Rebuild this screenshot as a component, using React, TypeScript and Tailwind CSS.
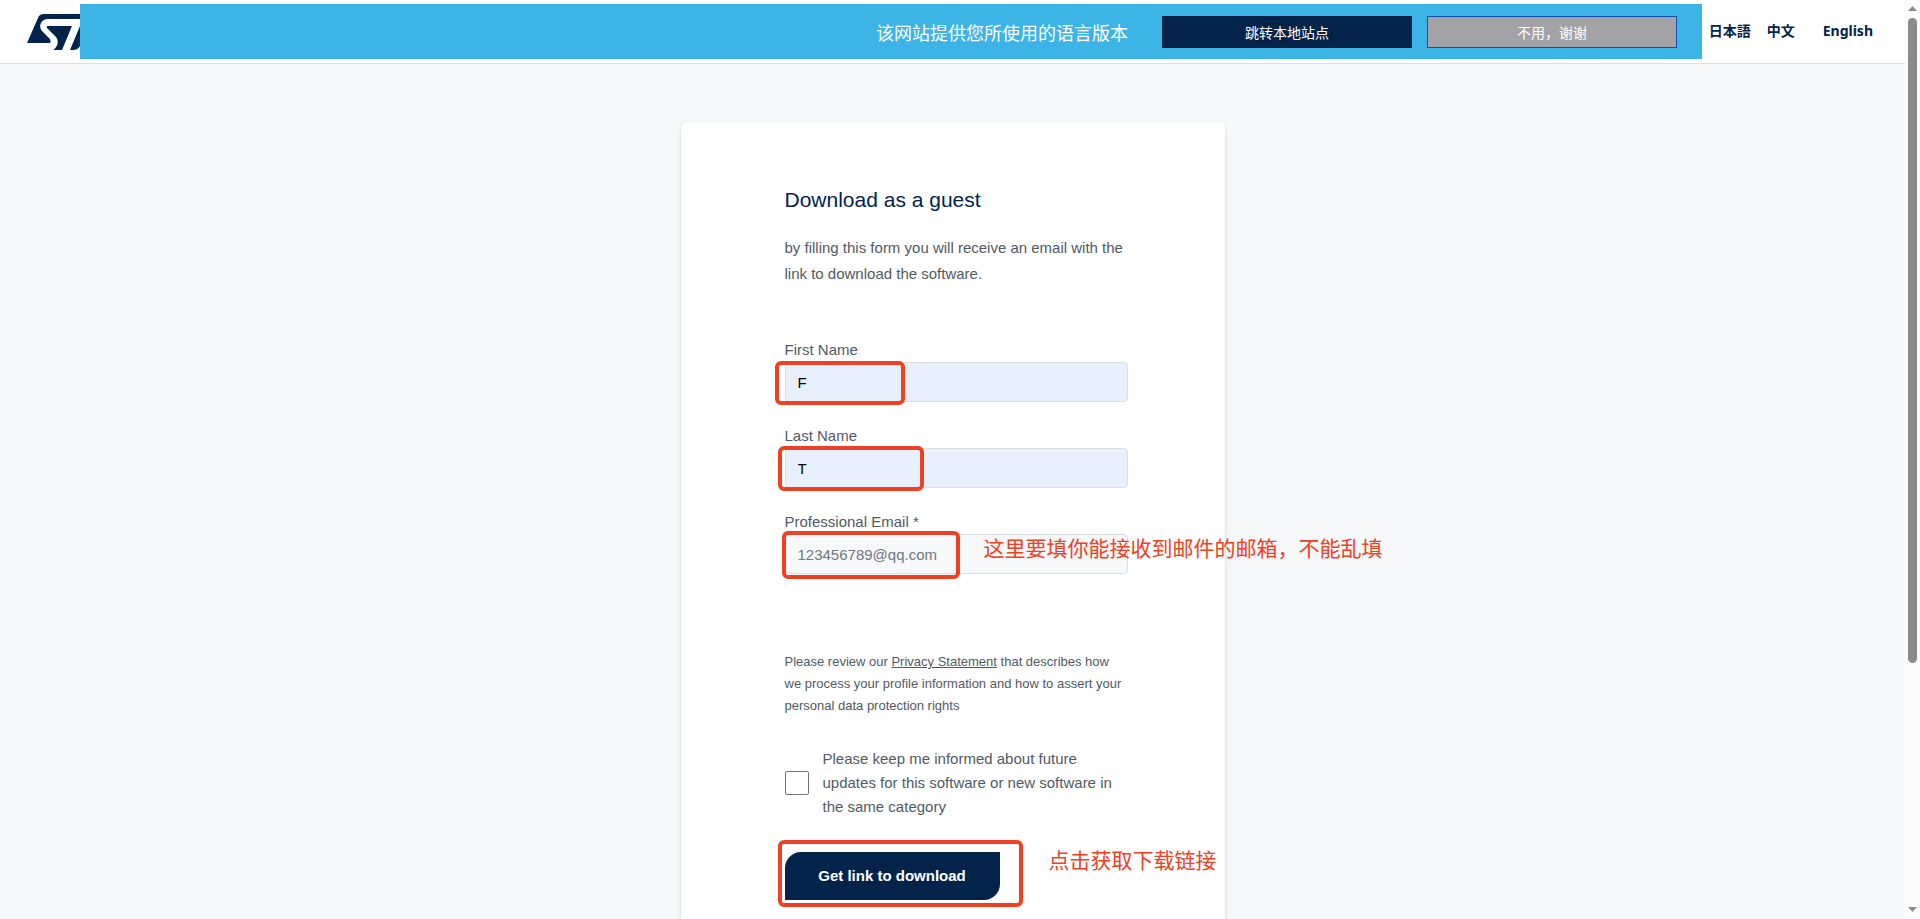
import React, { useState } from 'react'

const Logo = () => {
    return (
        <svg width="76" height="36" viewBox="0 0 76 36" aria-label="ST" role="img">
            <path d="M17 0 H76 V5 H21 C14 5 11 12 15 17 L22 24 C24 26 24 28 23 29 H0 L11 4 C12 1 14 0 17 0 Z" fill="#03234b" />
            <path d="M21 12 H45 L35 36 H26 C31 33 32 27 29 23 L21 15 C19 13 19 12 21 12 Z" fill="#03234b" />
            <path d="M53 12 H76 L68 26 H56 C53 33 51 36 46 36 H43 Z" fill="#03234b" />
        </svg>
    )
}

const Scrollbar = () => {
    return (
        <div className="flex w-[15px] shrink-0 flex-col items-center justify-between bg-[#fcfcfc] pt-1.5 pb-[7px]">
            <svg width="9" height="5" viewBox="0 0 9 5"><path d="M4.5 0 L9 5 H0 Z" fill="#8b8b8b" /></svg>
            <div className="mt-[7px] flex w-full flex-1 justify-center">
                <div className="h-[72.5%] w-[9px] rounded-full bg-[#8b8b8b]"></div>
            </div>
            <svg width="9" height="5" viewBox="0 0 9 5"><path d="M0 0 H9 L4.5 5 Z" fill="#8b8b8b" /></svg>
        </div>
    )
}

type FieldProps = {
    id: string
    label: string
    type?: string
    value: string
    placeholder?: string
    onChange: (value: string) => void
    children?: React.ReactNode
}

const Field = ({ id, label, type = 'text', value, placeholder, onChange, children }: FieldProps) => {
    return (
        <div className="relative mb-[22px]">
            <label htmlFor={id} className="block leading-6">{label}</label>
            <input
                id={id}
                type={type}
                value={value}
                placeholder={placeholder}
                onChange={(e) => onChange(e.target.value)}
                className={`block h-10 w-full rounded-sm border border-[#d9dee2] px-3 text-black placeholder:text-[#6f7780] outline-none ${value ? 'bg-[#e8f0fe]' : 'bg-[#f6f8fa]'}`}
            />
            {children}
        </div>
    )
}

const App = () => {

    const [firstName, setFirstName] = useState('F')
    const [lastName, setLastName] = useState('T')
    const [email, setEmail] = useState('')

    return (
        <div className="flex h-screen overflow-hidden bg-[#f6f8fa] font-['Liberation_Sans','Noto_Sans_CJK_SC',sans-serif] text-[15px] text-[#525a63]">
            <div className="flex-1 overflow-hidden">
                <header className="relative flex h-16 items-center justify-between border-b border-[#dcdee2] bg-white pr-8 pl-[27px]">
                    <Logo />
                    <nav className="flex pb-0.5 font-['Noto_Sans','Noto_Sans_CJK_JP',sans-serif] text-sm font-bold text-[#03234b]">
                        <a href="#ja" className="mr-4">日本語</a>
                        <a href="#zh" className="mr-7">中文</a>
                        <a href="#en">English</a>
                    </nav>
                    {/* language banner covers the middle of the header */}
                    <div className="absolute top-1 right-[203px] left-20 flex h-[55px] items-center justify-end bg-[#3cb4e6] pr-[25px] font-['Noto_Sans_CJK_SC',sans-serif] text-white">
                        <p className="mr-[34px] text-lg">该网站提供您所使用的语言版本</p>
                        <button className="mr-[15px] h-8 w-[250px] bg-[#03234b] text-sm">跳转本地站点</button>
                        <button className="h-8 w-[250px] border border-[#0f4bb4] bg-[#a3a2a7] text-sm">不用，谢谢</button>
                    </div>
                </header>

                <main className="mx-auto mt-[58px] w-[544px] rounded-md bg-white pt-16 pr-[97px] pb-16 pl-[104px] shadow-[0_2px_4px_rgba(0,0,0,0.15)]">
                    <h1 className="text-[21px] leading-7 text-[#03234b]">Download as a guest</h1>
                    <p className="mt-[21px] leading-[26px]">by filling this form you will receive an email with the link to download the software.</p>

                    <form className="mt-[51px]" onSubmit={(e) => e.preventDefault()}>
                        <Field id="first" label="First Name" value={firstName} onChange={setFirstName}>
                            <span className="pointer-events-none absolute top-[23px] -left-2.5 h-11 w-[130px] rounded-md border-4 border-[#ee4023]"></span>
                        </Field>
                        <Field id="last" label="Last Name" value={lastName} onChange={setLastName}>
                            <span className="pointer-events-none absolute top-[22px] -left-[7px] h-[45px] w-[146px] rounded-md border-4 border-[#ee4023]"></span>
                        </Field>
                        <Field id="email" label="Professional Email *" type="email" value={email} placeholder="123456789@qq.com" onChange={setEmail}>
                            <span className="pointer-events-none absolute top-[21px] -left-[3px] h-12 w-[178px] rounded-md border-4 border-[#ee4023]"></span>
                            <span className="pointer-events-none absolute top-6 left-[199px] text-[21px] leading-[30px] whitespace-nowrap text-[#ee4023]">这里要填你能接收到邮件的邮箱，不能乱填</span>
                        </Field>

                        <p className="mt-[77px] text-[13px] leading-[22px]">
                            Please review our <a href="#privacy" className="underline">Privacy Statement</a> that describes how we process your profile information and how to assert your personal data protection rights
                        </p>

                        <div className="mt-[30px] flex items-center gap-3.5">
                            <input id="updates" type="checkbox" className="h-6 w-6 shrink-0 appearance-none rounded-xs border border-[#767676] bg-white checked:bg-[#03234b]" />
                            <label htmlFor="updates" className="leading-6">Please keep me informed about future updates for this software or new software in the same category</label>
                        </div>

                        <div className="relative mt-[33px]">
                            <button type="submit" className="h-12 w-[215px] rounded-tl-2xl rounded-br-2xl bg-[#03234b] font-bold text-white">Get link to download</button>
                            <span className="pointer-events-none absolute -top-3 -left-[7px] h-[67px] w-[245px] rounded-md border-4 border-[#ee4023]"></span>
                            <span className="pointer-events-none absolute -top-1.5 left-[264px] text-[21px] leading-[30px] whitespace-nowrap text-[#ee4023]">点击获取下载链接</span>
                        </div>
                    </form>
                </main>
            </div>
            <Scrollbar />
        </div>
    )
}

export default App
